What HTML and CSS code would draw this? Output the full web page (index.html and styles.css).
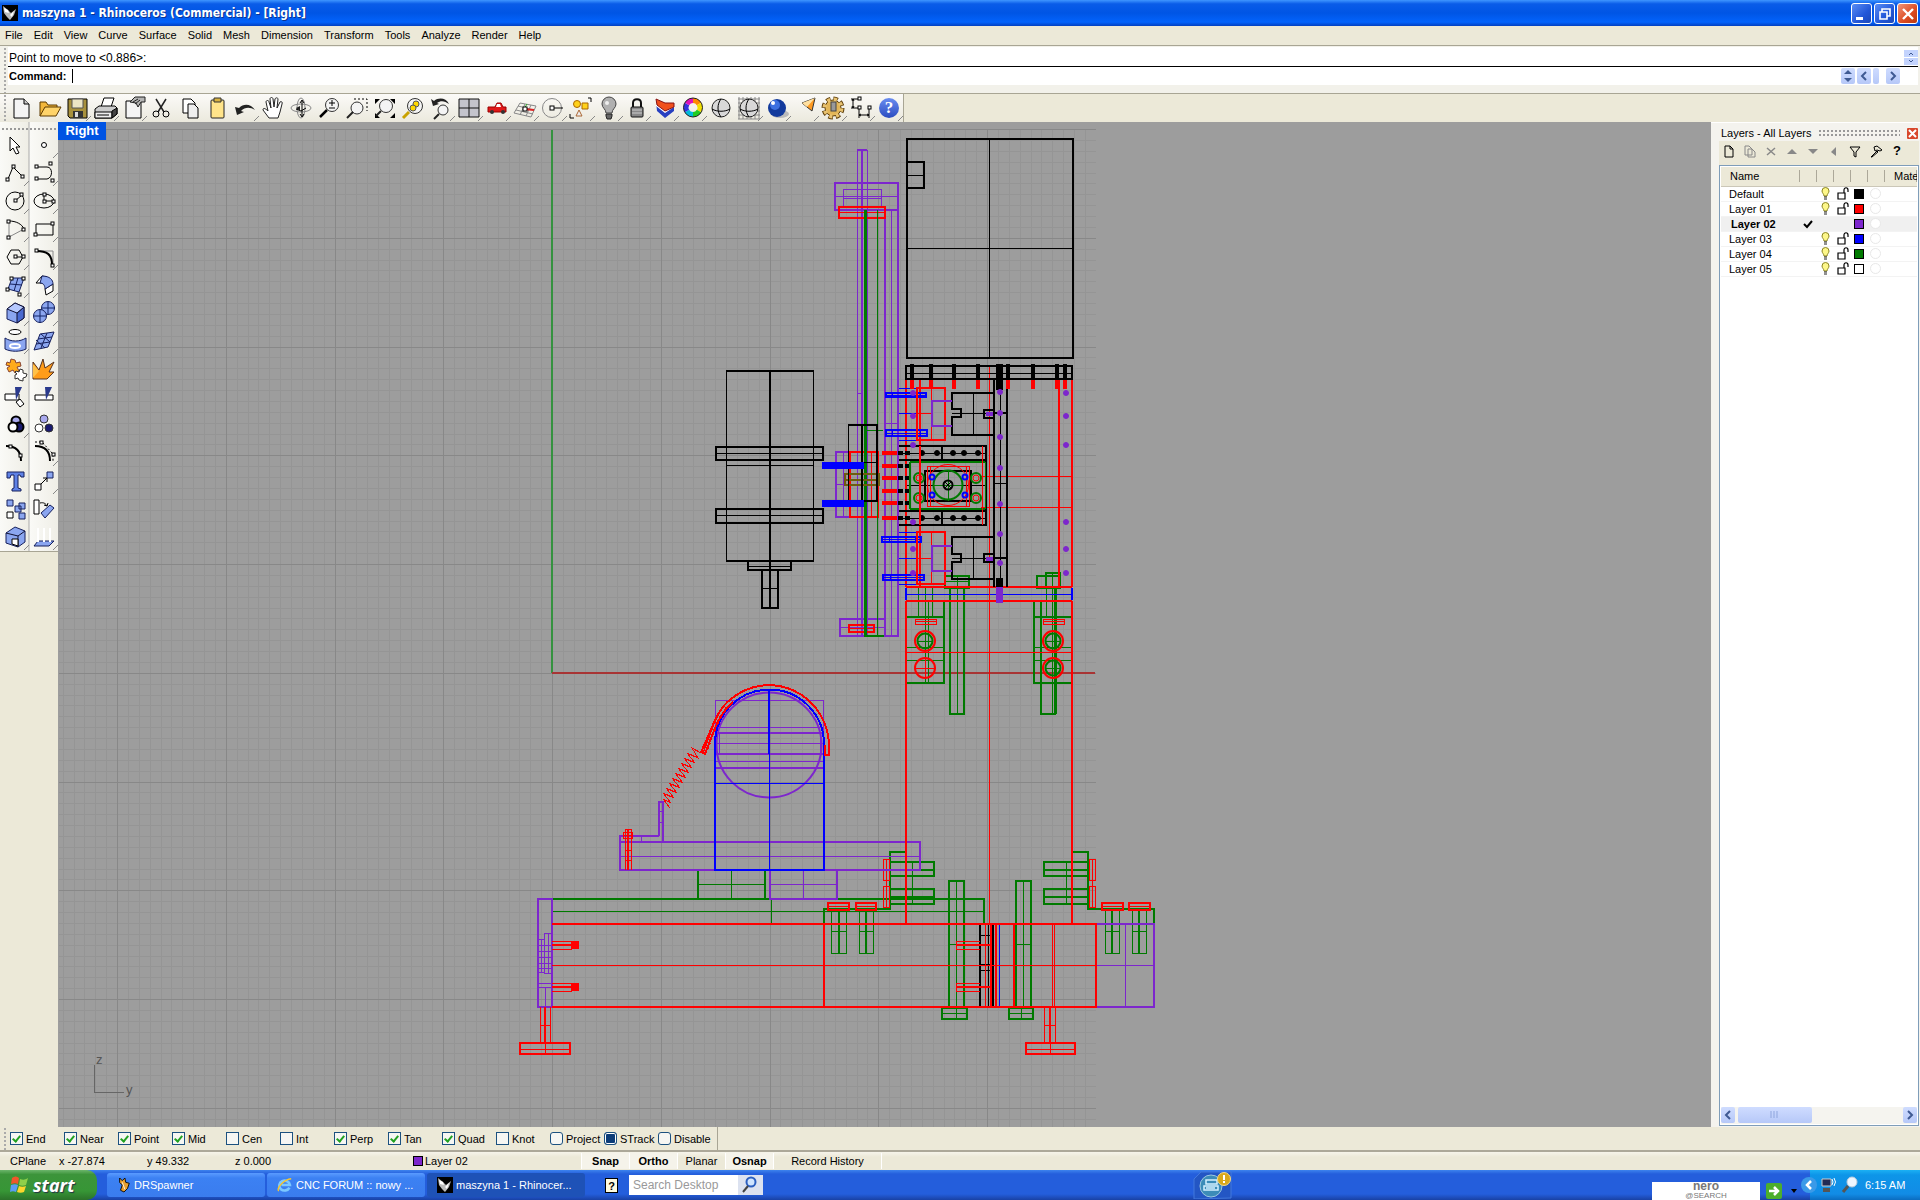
FILE: index.html
```
<!DOCTYPE html>
<html lang="en">
<head>
   <meta charset="utf-8">
   <title>maszyna 1 - Rhinoceros (Commercial) - [Right]</title>
   <link rel="stylesheet" href="styles.css">
</head>
<body>
   <header class="titlebar">
      <svg class="app" width="16" height="16" viewBox="0 0 16 16"><rect width="16" height="16" fill="#000"/><path d="M1 1l5 4 3 3 5-4-2 6-4 5-3-3-3-4z" fill="#bbb"/><path d="M2 3l4 2 1 3-4-1zM8 10l4-4-2 6z" fill="#fff"/></svg>
      <h1>maszyna 1 - Rhinoceros (Commercial) - [Right]</h1>
      <button class="win" aria-label="Minimize"><svg width="20" height="20" viewBox="0 0 20 20"><path d="M4 13h7v3H4z" fill="#fff"/></svg></button>
      <button class="win" aria-label="Restore"><svg width="20" height="20" viewBox="0 0 20 20"><path d="M7 8V5h8v7h-3M5 8h7v7H5z" fill="none" stroke="#fff" stroke-width="1.6"/></svg></button>
      <button class="win close" aria-label="Close"><svg width="20" height="20" viewBox="0 0 20 20"><path d="M5 5l10 10M15 5L5 15" stroke="#fff" stroke-width="2.4"/></svg></button>
   </header>

   <nav class="menu">
      <button>File</button><button>Edit</button><button>View</button><button>Curve</button><button>Surface</button><button>Solid</button><button>Mesh</button><button>Dimension</button><button>Transform</button><button>Tools</button><button>Analyze</button><button>Render</button><button>Help</button>
   </nav>

   <section class="command">
      <div class="history"><span>Point to move to &lt;0.886&gt;:</span>
         <span class="spin"><button aria-label="Up"><svg width="14" height="7"><path d="M5 5l2-2 2 2" class="arrow"/></svg></button><button aria-label="Down"><svg width="14" height="7"><path d="M5 2l2 2 2-2" class="arrow"/></svg></button></span>
      </div>
      <div class="prompt">
         <label for="cmd">Command:</label>
         <input id="cmd" type="text">
         <button class="sb" aria-label="Commands"><svg width="14" height="16"><path d="M3 6l4-4 4 4zM3 10l4 4 4-4z" fill="#3f5a93"/></svg></button>
         <button class="sb" aria-label="Left"><svg width="14" height="16"><path d="M9 4L5 8l4 4" class="arrow bold"/></svg></button>
         <span class="sb thumb"></span>
         <button class="sb" aria-label="Right"><svg width="14" height="16"><path d="M5 4l4 4-4 4" class="arrow bold"/></svg></button>
      </div>
   </section>

   <div class="toolrow">
   <div class="toolbar">
      <button aria-label="New"><svg viewBox="0 0 28 28"><path d="M7 5h10l5 5v14H7z" fill="#f4f4f4" stroke="#000"/><path d="M17 5v5h5" fill="#ccc" stroke="#000"/></svg></button>
      <button aria-label="Open"><svg viewBox="0 0 28 28"><path d="M5 22V8h6l2 3h9v3" fill="#f3b73b" stroke="#5d3a00"/><path d="M5 22l5-9h16l-5 9z" fill="#ffd46a" stroke="#5d3a00"/></svg></button>
      <button class="more" aria-label="Save"><svg viewBox="0 0 28 28"><path d="M5 5h19v19H7l-2-2z" fill="#a8913c" stroke="#000"/><path d="M9 5h11v9H9z" fill="#ece5c4" stroke="#555"/><path d="M10 17h10v7H10z" fill="#333"/><path d="M12 18h3v5h-3z" fill="#ddd"/></svg></button>
      <button class="more" aria-label="Print"><svg viewBox="0 0 28 28"><path d="M10 13l3-9h10l-3 9z" fill="#fff" stroke="#000"/><path d="M4 15l4-3h16l2 2v6l-5 4H4z" fill="#ccc" stroke="#000"/><path d="M4 18h17v6H4z" fill="#eee" stroke="#000"/><path d="M6 21h12M21 17l5-3v6l-5 4z" stroke="#000" fill="#444"/></svg></button>
      <button class="more" aria-label="Properties"><svg viewBox="0 0 28 28"><path d="M7 7h15v17H7z" fill="#f4f4f4" stroke="#000"/><path d="M11 8l5-5h10v5h-4l-3 5-2-4z" fill="#b5b5b5" stroke="#222"/><path d="M14 8l5-3M16 10l5-4" stroke="#222"/></svg></button>
      <button aria-label="Cut"><svg viewBox="0 0 28 28"><path d="M9 5l8 13M19 5l-8 13" stroke="#222" stroke-width="1.500" fill="none"/><circle cx="9" cy="20" r="3" class="ln"/><circle cx="19" cy="20" r="3" class="ln"/></svg></button>
      <button aria-label="Copy"><svg viewBox="0 0 28 28"><path d="M8 5h8l4 4v10H8z" fill="#fff" stroke="#000"/><path d="M13 10h6l4 4v10H13z" fill="#eee" stroke="#000"/></svg></button>
      <button aria-label="Paste"><svg viewBox="0 0 28 28"><rect x="8" y="6" width="13" height="18" rx="1" fill="#ffe48a" stroke="#222"/><path d="M11 4h7v4h-7z" fill="#d8b240" stroke="#333"/></svg></button>
      <button class="more" aria-label="Undo"><svg viewBox="0 0 28 28"><path d="M4 13l2 8 7-3-3-1c4-4 9-4 14-1-4-6-11-7-16-2z" fill="#222"/></svg></button>
      <button aria-label="Pan"><svg viewBox="0 0 28 28"><path d="M10 24l-6-8c0-3 3-1 5 1L7 8c0-2 3-2 3 0l2 6-1-9c0-2 3-2 3 0l1 8 1-8c1-2 3-1 3 0l-1 9 3-6c1-1 3 0 2 2l-2 8-2 6z" fill="#fff" stroke="#222"/></svg></button>
      <button aria-label="Rotate view"><svg viewBox="0 0 28 28"><ellipse cx="14" cy="14" rx="10" ry="4" class="gy"/><ellipse cx="14" cy="14" rx="4" ry="10" class="gy"/><path d="M15 7v15M9 15l5 2 5-3M13 9l2-3 2 3M13 20l2 3 2-3" class="ln"/><path d="M9 14l4-2v5z" fill="#222"/></svg></button>
      <button aria-label="Zoom"><svg viewBox="0 0 28 28"><circle cx="17" cy="11" r="6.500" class="lens"/><path d="M14 9h6M17 6v6M14 14h6" class="ln"/><path d="M12 16l-7 7" stroke="#000" stroke-width="2.500"/></svg></button>
      <button aria-label="Zoom window"><svg viewBox="0 0 28 28"><path d="M11 5h13v12" class="ln" stroke-dasharray="2 2"/><circle cx="14" cy="14" r="6" class="lens"/><path d="M10 18l-6 6" stroke="#222" stroke-width="2"/></svg></button>
      <button aria-label="Zoom extents"><svg viewBox="0 0 28 28"><path d="M4 5h5l-5 5zM24 5h-5l5 5zM4 24v-5l5 5zM24 24v-5l-5 5z" fill="#000"/><circle cx="15" cy="12" r="6.500" class="lens"/><path d="M10 17l-5 5" stroke="#222" stroke-width="2"/></svg></button>
      <button aria-label="Zoom selected"><svg viewBox="0 0 28 28"><circle cx="16" cy="12" r="7.500" class="lens"/><circle cx="17" cy="10" r="3" fill="#ffd800" stroke="#555"/><circle cx="14" cy="14" r="3" fill="#ffd800" stroke="#555"/><path d="M10 18l-6 6" stroke="#c9a200" stroke-width="3"/></svg></button>
      <button class="more" aria-label="Undo view"><svg viewBox="0 0 28 28"><path d="M4 5l2 7 6-2-2-1c4-3 8-2 12 1-3-6-10-7-15-3z" fill="#222"/><circle cx="16" cy="16" r="5" class="lens"/><path d="M12 20l-5 5" stroke="#222" stroke-width="2"/></svg></button>
      <button class="more" aria-label="Four views"><svg viewBox="0 0 28 28"><path d="M4 5h20v18H4zM14 5v18M4 14h20" fill="#c4c4cc" stroke="#111"/></svg></button>
      <button class="more" aria-label="Named views"><svg viewBox="0 0 28 28"><path d="M5 13h7l2-4h4l2 4h3v5H5z" fill="#e01818" stroke="#900"/><path d="M14 10h3l1 3h-5z" fill="#fff"/><circle cx="9" cy="18" r="2" fill="#333"/><circle cx="20" cy="18" r="2" fill="#333"/></svg></button>
      <button class="more" aria-label="CPlane"><svg viewBox="0 0 28 28"><path d="M9 9l16 3-5 11-17-4zM7 12l16 4M5 16l17 4M14 10l-5 11M20 11l-5 11" class="gy"/><path d="M13 15l10 1" stroke="#d22" stroke-width="2"/><path d="M13 15l3-5" stroke="#2a2"/><rect x="12" y="13" width="4" height="4" class="nd"/></svg></button>
      <button class="more" aria-label="Set view"><svg viewBox="0 0 28 28"><circle cx="13" cy="14" r="9.500" class="gy"/><path d="M13 14h11" class="ln"/><rect x="11" y="12" width="4" height="4" class="nd"/></svg></button>
      <button class="more" aria-label="Select"><svg viewBox="0 0 28 28"><circle cx="10" cy="10" r="3.500" fill="#ffd21c" stroke="#a60"/><path d="M15 9h6v6h-6z" fill="#ffd21c" stroke="#a60"/><path d="M12 16l3 6H9z" fill="#eee" stroke="#a63"/><path d="M21 4h3v4M3 20v4h4" class="ln"/></svg></button>
      <button class="more" aria-label="Hide"><svg viewBox="0 0 28 28"><path d="M11 19c0-4-4-5-4-9a7 7 0 0114 0c0 4-4 5-4 9z" fill="#b0b0b0" stroke="#444"/><path d="M11 20h6v2l-1 3h-4l-1-3z" fill="#666" stroke="#222"/><circle cx="12" cy="9" r="2" fill="#eee"/></svg></button>
      <button class="more" aria-label="Lock"><svg viewBox="0 0 28 28"><path d="M10 14V9c0-5 8-5 8 0v5" fill="none" stroke="#111" stroke-width="2"/><rect x="8" y="13" width="12" height="10" rx="1" fill="#888" stroke="#111"/><path d="M9 16h10M9 19h10" stroke="#ccc"/></svg></button>
      <button class="more" aria-label="Layers"><svg viewBox="0 0 28 28"><path d="M5 8l10 5 8-3v7l-9 7-8-7z" fill="#2840c0"/><path d="M5 8l9 7 9-5v3l-9 6-9-7z" fill="#fff"/><path d="M5 5l9 4h9v4l-9 4-8-6z" fill="#f0501c" stroke="#811"/></svg></button>
      <button class="more" aria-label="Properties"><svg viewBox="0 0 28 28" fill="none" stroke-width="5"><path d="M14 6.500a7 7 0 016 3.500" stroke="#f80"/><path d="M20 10a7 7 0 010 7" stroke="#f2e000"/><path d="M20 17a7 7 0 01-6 3.500" stroke="#2c2"/><path d="M14 20.500a7 7 0 01-6-3.500" stroke="#0bd"/><path d="M8 17a7 7 0 010-7" stroke="#33d"/><path d="M8 10a7 7 0 016-3.500" stroke="#d1b"/><circle cx="14" cy="13.500" r="9.500" stroke="#222" stroke-width="1"/></svg></button>
      <button aria-label="Shade"><svg viewBox="0 0 28 28"><circle cx="14" cy="14" r="9" fill="#d8d8d8" stroke="#222"/><path d="M5 15c5 3 13 3 18 0M14 5c-4 5-4 13 0 18" class="ln"/></svg></button>
      <button class="more" aria-label="Shaded view"><svg viewBox="0 0 28 28"><path d="M3 5h22M3 9h22M3 13h22M3 17h22M3 21h22M3 25h22M4 3v22M8 3v22M12 3v22M16 3v22M20 3v22M24 3v22" stroke="#888"/><circle cx="14" cy="14" r="9" fill="#d8d8d8" stroke="#222"/><path d="M5 15c5 3 13 3 18 0M14 5c-4 5-4 13 0 18" class="ln"/></svg></button>
      <button class="more" aria-label="Render"><svg viewBox="0 0 28 28"><ellipse cx="17" cy="20" rx="9" ry="4" fill="#bbb"/><circle cx="14" cy="14" r="9" fill="#123a9c"/><circle cx="12" cy="11" r="5" fill="#3d70e0"/><circle cx="10" cy="9" r="2" fill="#fff"/></svg></button>
      <button class="more" aria-label="Spotlight"><svg viewBox="0 0 28 28"><path d="M11 9l13-5-3 13z" fill="#ff9a20" stroke="#333"/><path d="M11 9l13-5-8 9z" fill="#ffe0a0"/></svg></button>
      <button class="more" aria-label="Options"><svg viewBox="0 0 28 28"><circle cx="14" cy="14" r="8.500" fill="none" stroke="#5b3c08" stroke-width="6" stroke-dasharray="4 2.700"/><circle cx="14" cy="14" r="8" fill="#e3b658" stroke="#5b3c08"/><circle cx="14" cy="14" r="8.500" fill="none" stroke="#e8c270" stroke-width="4" stroke-dasharray="3 3.700" stroke-dashoffset="-.5"/><rect x="12" y="8" width="5" height="9" fill="#999" stroke="#444"/></svg></button>
      <button class="more" aria-label="Dimension"><svg viewBox="0 0 28 28"><path d="M4 5h8M4 14h8M6 5v9M12 14v10M22 14v10M12 21h10M5 7l1-2 1 2M5 12l1 2 1-2M14 20l-2 1 2 1M20 20l2 1-2 1" class="ln"/><rect x="11" y="3" width="3" height="3" class="nd"/><rect x="11" y="12" width="3" height="3" class="nd"/><rect x="21" y="12" width="3" height="3" class="nd"/></svg></button>
      <button class="more help" aria-label="Help"><span>?</span></button>
   </div>
   </div>

   <main class="work">
      <aside class="tools">
      <div class="palette">
         <button aria-label="Select"><svg viewBox="0 0 28 28"><path d="M9 6v14l3-3 3 6 3-1-3-6h4z" fill="#fff" stroke="#000"/></svg></button>
         <button class="more" aria-label="Point"><svg viewBox="0 0 28 28"><circle cx="14" cy="14" r="2.500" class="nd"/></svg></button>
         <button class="more" aria-label="Polyline"><svg viewBox="0 0 28 28"><path d="M7 20l5-12 9 9" class="ln"/><rect x="5" y="19" width="3" height="3" class="nd"/><rect x="11" y="6" width="3" height="3" class="nd"/><rect x="20" y="16" width="3" height="3" class="nd"/></svg></button>
         <button class="more" aria-label="Curve"><svg viewBox="0 0 28 28"><path d="M7 8h10c6 0 6 11 0 12H7" class="ln"/><rect x="5" y="6" width="3" height="3" class="nd"/><rect x="19" y="3" width="3" height="3" class="nd"/><rect x="5" y="18" width="3" height="3" class="nd"/><rect x="21" y="20" width="3" height="3" class="nd"/></svg></button>
         <button class="more" aria-label="Circle"><svg viewBox="0 0 28 28"><circle cx="14" cy="14" r="9" class="ln"/><path d="M14 14l7-6" class="ln"/><rect x="13" y="12" width="3" height="3" class="nd"/><rect x="19" y="6" width="3" height="3" class="nd"/></svg></button>
         <button class="more" aria-label="Ellipse"><svg viewBox="0 0 28 28"><ellipse cx="14" cy="14" rx="10" ry="7" class="ln"/><path d="M14 14h10M14 14V7" class="ln"/><rect x="13" y="13" width="3" height="3" class="nd"/><rect x="13" y="6" width="3" height="3" class="nd"/><rect x="22" y="13" width="3" height="3" class="nd"/></svg></button>
         <button class="more" aria-label="Arc"><svg viewBox="0 0 28 28"><path d="M8 6v16l15-8" class="gy"/><path d="M8 6c7 0 13 3 15 8" class="ln"/><rect x="6" y="5" width="3" height="3" class="nd"/><rect x="6" y="21" width="3" height="3" class="nd"/><rect x="21" y="13" width="3" height="3" class="nd"/></svg></button>
         <button class="more" aria-label="Rectangle"><svg viewBox="0 0 28 28"><path d="M6 9h17v11H6z" class="ln"/><rect x="21" y="7" width="3" height="3" class="nd"/><rect x="4" y="18" width="3" height="3" class="nd"/></svg></button>
         <button class="more" aria-label="Polygon"><svg viewBox="0 0 28 28"><path d="M6 14l4-7h8l4 7-4 7h-8zM14 14h8" class="ln"/><rect x="13" y="12" width="3" height="3" class="nd"/><rect x="21" y="12" width="3" height="3" class="nd"/></svg></button>
         <button class="more" aria-label="Fillet"><svg viewBox="0 0 28 28"><path d="M6 8h17v14" class="gy"/><path d="M6 8c11 0 16 3 16 14" class="ln w2"/><rect x="5" y="6" width="3" height="3" class="nd"/><rect x="21" y="21" width="3" height="3" class="nd"/></svg></button>
         <button class="more" aria-label="Surface"><svg viewBox="0 0 28 28"><path d="M11 7h12l-5 14-11-3zM17 7l-4 13M9 13l12 1" class="bl"/><rect x="9" y="6" width="3" height="3" class="nd"/><rect x="21" y="6" width="3" height="3" class="nd"/><rect x="5" y="17" width="3" height="3" class="nd"/><rect x="17" y="22" width="3" height="3" class="nd"/></svg></button>
         <button class="more" aria-label="Sweep"><svg viewBox="0 0 28 28"><path d="M6 12l6-7 5 1-3 6zM15 18l8-5v7l-7 4z" fill="#fff" stroke="#000"/><path d="M12 5c8 0 11 4 11 8l-8 5c0-4-2-6-5-6z" class="bl"/></svg></button>
         <button class="more" aria-label="Box"><svg viewBox="0 0 28 28"><path d="M6 10l8-6 9 4v11l-7 5-10-4z" class="bl"/><path d="M16 14v10l7-5V8z" fill="#4a6ad0" stroke="#113"/><path d="M6 10l8-6 9 4-7 6z" fill="#b5c8ff" stroke="#113"/></svg></button>
         <button class="more" aria-label="Boolean"><svg viewBox="0 0 28 28"><circle cx="18" cy="9" r="6.500" class="bl"/><circle cx="10" cy="17" r="6.500" class="bl"/><path d="M4 17h13M10 11v13M12 9h13M18 3v12" stroke="#126" fill="none"/></svg></button>
         <button class="more" aria-label="Project"><svg viewBox="0 0 28 28"><ellipse cx="14" cy="5" rx="6" ry="2.500" class="nd"/><path d="M4 11c6 4 15 4 21 0v11c-6 3-15 3-21 0z" class="bl"/><ellipse cx="14" cy="19" rx="5" ry="2" fill="none" stroke="#fff" stroke-width="2"/></svg></button>
         <button class="more" aria-label="Mesh"><svg viewBox="0 0 28 28"><path d="M10 7l14-2-6 15-14 3zM17 6l-6 15M8 12l14-2M6 17l14-2M11 7l9 8M6 13l9 8" class="bl"/></svg></button>
         <button aria-label="Plug-ins"><svg viewBox="0 0 28 28"><path d="M6 7l3 1 1-4 4 1 1 3 4-1 1 4-4 1 2 4-4 2-2-3-4 2-2-4 3-2-4-1z" fill="#ffab1c" stroke="#843"/><path d="M15 16l3 1 1-3 3 1v3l4 1-1 3-3 1v3l-4-1-1-2-3 1v-4l2-1-2-2z" fill="#fff" stroke="#333"/></svg></button>
         <button aria-label="Explode"><svg viewBox="0 0 28 28"><path d="M3 7l6 8 4-11 2 9 9-6-5 10h5l-7 7H3z" fill="#ff9c1a" stroke="#532"/><path d="M3 9l6 7-6 7z" fill="#ffc14a"/></svg></button>
         <button aria-label="Trim"><svg viewBox="0 0 28 28"><path d="M4 11h14v6H4z" fill="#fff" stroke="#000"/><path d="M15 19l4-3 4 5-4 3z" fill="#fff" stroke="#000"/><path d="M14 4h7l-6 13z" fill="#2a3a8c"/></svg></button>
         <button aria-label="Split"><svg viewBox="0 0 28 28"><path d="M5 12h18v5H5z" fill="#fff" stroke="#000"/><path d="M15 4h7l-6 13z" fill="#2a3a8c"/></svg></button>
         <button class="more" aria-label="Join"><svg viewBox="0 0 28 28"><g stroke="#000" stroke-width="2"><circle cx="15" cy="10" r="4.500" fill="#a9a9ee"/><circle cx="18" cy="16" r="4.500" fill="#1a1a70"/><circle cx="12" cy="16" r="4.500" fill="#fff"/></g></svg></button>
         <button aria-label="Group"><svg viewBox="0 0 28 28"><g stroke="#333"><circle cx="14" cy="8" r="4" fill="#a9a9ee"/><circle cx="19" cy="17" r="4" fill="#1a1a70"/><circle cx="9" cy="17" r="4" fill="#fff"/></g></svg></button>
         <button aria-label="Edit points"><svg viewBox="0 0 28 28"><path d="M5 7c10 0 15 5 15 15" class="ln w2"/><rect x="8" y="6" width="3" height="3" class="nd"/><rect x="18" y="15" width="3" height="3" class="nd"/></svg></button>
         <button class="more" aria-label="Control points"><svg viewBox="0 0 28 28"><path d="M5 7c10 0 15 5 15 15" class="ln w2"/><path d="M5 3h7l11 12v7" class="ln" stroke-dasharray="2 2"/><rect x="10" y="2" width="3" height="3" class="nd"/><rect x="22" y="14" width="3" height="3" class="nd"/></svg></button>
         <button aria-label="Type"><svg viewBox="0 0 28 28"><path d="M6 5h17v5h-3l-1-2h-2v13l3 1v2h-9v-2l2-1V8h-3l-1 3H6z" fill="#5f82e6" stroke="#16205c"/></svg></button>
         <button class="more" aria-label="Move"><svg viewBox="0 0 28 28"><path d="M17 5h6v6h-6z" class="bl"/><path d="M5 17h6v6H5z" fill="#fff" stroke="#000"/><path d="M11 17l6-6m-4 0h4v4" class="ln"/></svg></button>
         <button aria-label="Array"><svg viewBox="0 0 28 28"><path d="M6 5h6v6H6zM18 8h6v6h-6zM14 11h6v6h-6zM18 18h6v6h-6z" class="bl"/><path d="M6 17h6v6H6z" fill="#fff" stroke="#000"/></svg></button>
         <button aria-label="Rotate"><svg viewBox="0 0 28 28"><path d="M4 5h5v14H4z" fill="#fff" stroke="#000"/><path d="M11 18l9-8 4 3-9 10z" class="bl"/><path d="M10 8c4-1 6 1 7 3m-3-1l3 1 1-3" class="ln"/></svg></button>
         <button class="more" aria-label="Analyze"><svg viewBox="0 0 28 28"><path d="M5 10l9-6 10 4v11l-7 5-12-4z" class="bl"/><path d="M5 10l12 3 7-5M17 13v11" fill="none" stroke="#113"/><path d="M11 16h6v7l-6-2z" fill="#fff" stroke="#000"/></svg></button>
         <button class="more" aria-label="Render"><svg viewBox="0 0 28 28"><path d="M8 18h16l-5 5H4z" class="bl"/><path d="M8 5v14M14 5v14M20 5v14" stroke="#fff" stroke-width="2"/></svg></button>
      </div>
      </aside>

      <section class="viewport">
         <h2>Right</h2>
         <svg class="drawing">
         <g transform="translate(-58 -122)">
            <!-- construction grid, 10 minor lines to a major -->
            <path d="M62.625 628H1096" stroke="#959595" stroke-width="998" stroke-dasharray="1 9.875"/>
            <path d="M577 129V1127" stroke="#959595" stroke-width="1037" stroke-dasharray="1 9.875"/>
            <path d="M117 628H1096" stroke="#888" stroke-width="998" stroke-dasharray="1 107.750"/>
            <path d="M577 129V1127" stroke="#888" stroke-width="1037" stroke-dasharray="1 107.750"/>
            <path d="M552 130V673" stroke="#35923f" stroke-width="2"/>
            <path d="M552 673H1095" stroke="#a83434" stroke-width="2"/>
            <path d="M94 1065V1092H124" stroke="#666"/>

            <!-- base frame -->
            <g class="g">
               <path class="t" d="M553 899H984V924M824 924V909H890V852H906M1072 852H1088V909H1154V924"/>
               <path d="M553 911H984M771 899V924"/>
               <path class="t" d="M698 870V899M765 870V899"/><path d="M731 870V899M698 884H765"/>
               <path d="M831 910H846V953H831ZM859 910H873V953H859ZM1105 910H1119V953H1105ZM1132 910H1146V953H1132Z"/>
               <path class="t" d="M839 910V953M866 910V953M1112 910V953M1139 910V953"/>
               <path d="M831 931H846M859 931H873M1105 931H1119M1132 931H1146"/>
               <path class="t" d="M890 862H934V876H890ZM890 889H934V904H890ZM1044 862H1088V876H1044ZM1044 889H1088V904H1044Z"/>
               <path d="M912 862V904M1066 862V904"/>
               <path class="t" d="M890 870H934M890 897H934M1044 870H1088M1044 897H1088"/>
               <path class="t" d="M949 1007V881H964V1007M1016 1007V881H1031V1007"/>
               <path d="M956 881V1007M1023 881V1007M949 944H964M1016 944H1031M942 1013H967M1009 1013H1033M956 1007V1019M1021 1007V1019"/>
               <path class="t" d="M942 1008H967V1019H942ZM1009 1008H1033V1019H1009Z"/>
            </g>
            <g class="p">
               <path class="t" d="M538 899H552V1007H538ZM1096 924H1154V1007H1096"/>
               <path d="M1125 924V1007M1096 965H1154M544 933H552V973H544ZM548 933V973M538 939H544V972H538ZM541 939V972M538 945H552M538 951H552M538 957H552M538 963H552M538 968H552M545 987V1007M538 987H552M538 983H552"/>
            </g>
            <g class="k">
               <path class="t" d="M980 924V1007M993 924V1007"/><path d="M980 935H992M980 964H992M980 970H992M988 924V1007"/>
            </g>
            <path class="b" d="M999 924V1007"/>
            <g class="r">
               <path class="t" d="M552 924H1096V1007H552M824 924V1007M1014 924V1007M991 924V1007M996 924V1007"/>
               <path d="M552 965H1096M1052 924V1007M1054 924V1007M985 924V1007"/>
               <path d="M552 941H572M552 949H572M552 983H572M552 991H572M980 941H956V949H980M980 983H956V991H980"/>
               <path class="t" d="M552 945H572M552 987H572M956 945H992M956 987H992"/>
               <path class="f" d="M571 941h7v7h-7zM571 983h7v7h-7z"/>
               <path d="M540 1007V1043M550 1007V1043M540 1025H550M1044 1007V1043M1055 1007V1043M1044 1025H1055M520 1049H570M1026 1049H1075M545 1043V1055M1050 1043V1055"/>
               <path class="t" d="M545 1007V1043M1050 1007V1043M520 1043H570V1054H520ZM1026 1043H1075V1054H1026Z"/>
               <path class="t" d="M828 903H849V910H828ZM856 903H876V910H856ZM1102 903H1123V910H1102ZM1129 903H1150V910H1129Z"/>
               <path d="M828 906H849M856 906H876M1102 906H1123M1129 906H1150"/>
               <path d="M883 859H889V880H883ZM883 886H889V907H883ZM1089 859H1095V880H1089ZM1089 886H1095V907H1089ZM886 859V907M1092 859V907"/>
            </g>

            <!-- table and lower motor -->
            <g class="p">
               <path class="t" d="M659 836H620V870H920V842H620M659 836V802H663V842M770 870V899H837V870"/>
               <path d="M620 856H920M641 836V842M803 870V899M770 884H837M659 811H663M659 822H663"/>
               <path d="M715 754V700H823V754M715 727H823M715 743H823M715 754H823M715 761H823M719 754V733M820 754V733"/>
               <path class="t" d="M715 733H823M715 754H823M715 768H823"/>
               <circle class="t" cx="769" cy="745" r="52.500"/>
            </g>
            <g class="b">
               <path class="t" d="M715 744V870H824V744A54.500 54.500 0 00715 744"/>
               <path class="t" d="M769 689V754"/><path d="M769 689V870M715 783H824"/>
            </g>
            <g class="r">
               <path class="t" d="M731 699A60 61 0 01829 745V755H825V745M731 699C716 710 712 730 701 752L705 754C714 731 718 715 733 702"/>
               <path d="M727 702C715 714 713 730 703 753M706 742l5 2M711 729l5 2M717 715l5 3M723 706l5 3M704 747l5 2M714 722l5 2"/>
               <path d="M703 751l-2 2l-9-5l6 10l-11-5l8 10l-11-5l8 10l-11-5l8 10l-11-5l8 10l-11-5l8 10l-11-5l8 10l-11-5l8 10l-11-5l8 10l-11-5l8 10l-8-4l7 9"/>
               <path d="M625 829H631V870M625 829V870M623 832H632V838H623ZM623 835H632M625 850H631M625 860H631"/><path class="t" d="M628 829V870"/>
            </g>

            <!-- column -->
            <g class="g">
               <path class="t" d="M945 576H969V588H945ZM1037 576H1060V588H1037ZM1046 573H1060V587H1046Z"/>
               <path d="M945 581H969M957 576V714M1052 573V714M1056 588V714M1046 588V617M918 588V617M925 588V682M932 588V617M928 600V682M906 647H944M906 660H944M1034 647H1072M1034 660H1072M918 594H932M956 652H964"/>
               <path class="t" d="M950 588V714H964V588M1041 600V714H1055V588M944 600V683H906M1034 600V683H1072M906 617H944M1034 617H1072"/>
               <circle class="t" cx="925" cy="641" r="7.500"/><circle class="t" cx="1053" cy="641" r="7.500"/><circle class="t" cx="1053" cy="668" r="7.500"/><path d="M918 641H933M1045 641H1061M1045 668H1061"/>
            </g>
            <g class="b"><path d="M906 594H1072"/><path class="t" d="M906 588V600M1072 588V600"/></g>
            <g class="r">
               <path class="t" d="M906 380V587M1072 380V587M906 601V924M1072 601V924M906 587H1072M906 601H1072M920 380V587M1059 380V587"/>
               <path d="M989 366V924M981 476H1072M981 507H1072M906 652H1072M915 619H936V624H915ZM1043 619H1064V624H1043ZM915 621H936M1043 621H1064M915 668H936M925 658V678"/>
               <circle class="t" cx="925" cy="641" r="10"/><circle class="t" cx="925" cy="668" r="10"/><circle class="t" cx="1053" cy="641" r="10"/><circle class="t" cx="1053" cy="668" r="10"/>
            </g>

            <!-- spindle slide -->
            <g class="p">
               <path d="M857 150V636M867 150V636M843 206V189H881V206M835 196H898M843 198H881M891 210V636M857 393H862M885 423H898M840 627H885M843 452V517M836 484H850"/>
               <path class="t" d="M857 150H867M862 150V636M835 183H898V210H835ZM885 210V636H898V210M885 619H840V636H885M850 452H836V517H850"/>
            </g>
            <g class="r">
               <path class="t" d="M839 207H885V218H839ZM850 452H878V517H850ZM849 625H874V632H849Z"/><path d="M839 212H885M871 452V517M849 628H874"/>
            </g>
            <g class="g">
               <path class="t3" d="M865 210V636"/><path d="M877 210V636M865 430H883"/><path class="t" d="M864 636H884"/>
               <path class="olive t" d="M845 474H879V485H845ZM845 480H879"/>
            </g>
            <g class="k">
               <path class="t" d="M726 371H814M726 561H814M770 371V608M716 447H823V460H716ZM716 509H823V523H716ZM748 561H791V570H748ZM762 570V608H778V570M862 425V501M848 425H877V501H862"/>
               <path d="M726 371V561M813 371V561M726 465H814M716 453H823M716 515H823M748 566H791M762 588H778M848 425V501M848 462H877"/>
            </g>
            <g class="b">
               <path class="f" d="M822 462h41v6h-41zM822 500h41v6h-41z"/>
               <path class="t" d="M886 393H926V397H886ZM886 430H927V436H886ZM882 537H921V542H882ZM883 575H924V580H883Z"/>
               <path d="M886 395H926M886 433H927M882 539H921M883 577H924M892 393V397M920 393V397M892 430V436M920 430V436M889 537V542M915 537V542M890 575V580M917 575V580M899 388H917M899 440H917M899 532H917M899 584H917M899 413H917M899 558H917"/>
            </g>

            <!-- control cabinet -->
            <g class="k">
               <path class="t" d="M907 139H1073V358H907ZM907 162H924V188H907"/><path d="M989 139V358M907 248H1073M907 175H924"/>
            </g>

            <!-- ball screw housing -->
            <g class="k">
               <path class="t" d="M906 366H1072V379H906ZM994 379V587M1007 379V587M994 393H952V409H961V417H952V435H994M994 537H952V554H961V562H952V579H994M984 410H994V418H984ZM984 554H994V562H984ZM994 413H1008M994 558H1008"/>
               <path d="M906 373H1072M1000 389V587M994 483H1007M973 393V435M973 537V579M952 413H994M952 558H994M899 453H986M899 518H986M907 485H986"/>
               <path class="t" d="M899 446H986V525H899M899 460H986M899 511H986M942 446V460M942 511V525M925 471H971V501H925Z"/>
               <path class="bolt" d="M912 364V379M931 364V379M954 364V379M978 364V379M1008 364V379M1033 364V379M1057 364V379M1065 364V379"/>
               <path class="f" d="M996 364h6v25h-6zM996 578h6v9h-6z"/>
               <path class="pin" d="M898 453H910M898 466H910M898 478H910M898 491H910M898 503H910M898 518H910" stroke-dasharray="5 2"/>
               <g class="f"><circle cx="922" cy="453" r="2.500"/><circle cx="937" cy="453" r="2.500"/><circle cx="953" cy="453" r="2.500"/><circle cx="964" cy="453" r="2.500"/><circle cx="978" cy="453" r="2.500"/><circle cx="922" cy="518" r="2.500"/><circle cx="937" cy="518" r="2.500"/><circle cx="953" cy="518" r="2.500"/><circle cx="964" cy="518" r="2.500"/><circle cx="978" cy="518" r="2.500"/></g>
            </g>
            <g class="g">
               <path class="t" d="M910 462H985M910 509H985M910 462V509"/><path d="M948 471V501M933 485H963M985 462V509"/><circle class="t" cx="948" cy="485" r="14.500"/>
               <circle class="t" cx="919" cy="478" r="5"/><circle class="t" cx="976" cy="478" r="5"/><circle class="t" cx="919" cy="498" r="5"/><circle class="t" cx="976" cy="498" r="5"/>
            </g>
            <g class="r">
               <path class="t" d="M917 388H945V440H917ZM917 532H945V584H917Z"/>
               <path d="M931 388V440M931 532V584M917 413H931M917 558H931M927 466H969V506H927ZM930 466V506M966 466V506M982 446V525"/>
               <path class="bolt" d="M912 380V389M931 380V389M954 380V389M978 380V389M1008 380V389M1033 380V389M1057 380V389M1065 380V389"/>
               <path class="pin" d="M882 453H897M882 466H897M882 478H897M882 491H897M882 503H897M882 518H897"/>
               <circle cx="948" cy="485" r="20.500"/><circle cx="919" cy="478" r="3"/><circle cx="976" cy="478" r="3"/><circle cx="919" cy="498" r="3"/><circle cx="976" cy="498" r="3"/>
               <path class="t" d="M920 446V525"/>
            </g>
            <g class="b"><circle class="t" cx="932" cy="477" r="2.500"/><circle class="t" cx="965" cy="477" r="2.500"/><circle class="t" cx="932" cy="495" r="2.500"/><circle class="t" cx="965" cy="495" r="2.500"/></g>
            <g class="k"><circle class="t" cx="948" cy="485" r="4.500"/><path d="M945 482l6 6M951 482l-6 6"/></g>
            <g class="p">
               <path class="t" d="M952 401H932V426H952M952 546H932V571H952"/><path class="f" d="M996 587h6v15h-6zM986 412h6v3h-6zM986 557h6v3h-6z"/>
               <g class="f"><circle cx="1066" cy="393" r="2.500"/><circle cx="1066" cy="416" r="2.500"/><circle cx="1066" cy="445" r="2.500"/><circle cx="1066" cy="522" r="2.500"/><circle cx="1066" cy="549" r="2.500"/><circle cx="1066" cy="573" r="2.500"/><circle cx="913" cy="393" r="2.500"/><circle cx="913" cy="416" r="2.500"/><circle cx="913" cy="445" r="2.500"/><circle cx="913" cy="522" r="2.500"/><circle cx="913" cy="549" r="2.500"/><circle cx="913" cy="573" r="2.500"/><circle cx="1000" cy="392" r="2.500"/><circle cx="1000" cy="413" r="2.500"/><circle cx="1000" cy="437" r="2.500"/><circle cx="1000" cy="468" r="2.500"/><circle cx="1000" cy="504" r="2.500"/><circle cx="1000" cy="534" r="2.500"/><circle cx="1000" cy="563" r="2.500"/></g>
            </g>
            <text x="96" y="1064">z</text><text x="126" y="1094">y</text>
         </g>
         </svg>
      </section>

      <aside class="layers">
         <div class="caption"><h3>Layers - All Layers</h3><span class="dots"></span><button class="x" aria-label="Close"><svg width="11" height="11"><path d="M2 2l7 7M9 2L2 9" stroke="#fff" stroke-width="2"/></svg></button></div>
         <div class="actions">
            <button aria-label="New layer"><svg viewBox="0 0 16 16"><path d="M4 3h5l3 3v8H4zM9 3v3h3" class="ln"/></svg></button>
            <button aria-label="Copy layer"><svg viewBox="0 0 16 16"><path d="M3 3h4l3 3v6H3zM6 6h4l3 3v5H6z" class="gy"/></svg></button>
            <button aria-label="Delete"><svg viewBox="0 0 16 16"><path d="M4 5l8 7M12 5l-8 7" stroke="#888" stroke-width="1.500"/></svg></button>
            <button aria-label="Move up"><svg viewBox="0 0 16 16"><path d="M3 11l5-5 5 5z" fill="#888"/></svg></button>
            <button aria-label="Move down"><svg viewBox="0 0 16 16"><path d="M3 6l5 5 5-5z" fill="#888"/></svg></button>
            <button aria-label="Parent"><svg viewBox="0 0 16 16"><path d="M10 4L5 9l5 4z" fill="#888"/></svg></button>
            <button aria-label="Filter"><svg viewBox="0 0 16 16"><path d="M3 4h10L9 9v5l-2-1V9z" class="ln"/></svg></button>
            <button aria-label="Tools"><svg viewBox="0 0 16 16"><path d="M3 14l6-6 1 1-6 5zM6 4l3-1 5 4-2 1-3-1-2 1z" class="ln"/></svg></button>
            <button class="q" aria-label="Help">?</button>
         </div>
         <div class="list">
            <table>
               <thead><tr><th class="name">Name</th><th></th><th></th><th></th><th></th><th></th><th class="mat">Mate</th></tr></thead>
               <tbody>
                  <tr><td>Default</td><td></td><td><svg class="lamp"><use href="#lamp"/></svg></td><td><svg class="lamp"><use href="#lock"/></svg></td><td><i class="sw black"></i></td><td><i class="ring"></i></td><td></td></tr>
                  <tr><td>Layer 01</td><td></td><td><svg class="lamp"><use href="#lamp"/></svg></td><td><svg class="lamp"><use href="#lock"/></svg></td><td><i class="sw red"></i></td><td><i class="ring"></i></td><td></td></tr>
                  <tr class="cur"><td>Layer 02</td><td><svg class="lamp"><path d="M2 7l3 3 5-6" fill="none" stroke="#000" stroke-width="2"/></svg></td><td></td><td></td><td><i class="sw purple"></i></td><td><i class="ring"></i></td><td></td></tr>
                  <tr><td>Layer 03</td><td></td><td><svg class="lamp"><use href="#lamp"/></svg></td><td><svg class="lamp"><use href="#lock"/></svg></td><td><i class="sw blue"></i></td><td><i class="ring"></i></td><td></td></tr>
                  <tr><td>Layer 04</td><td></td><td><svg class="lamp"><use href="#lamp"/></svg></td><td><svg class="lamp"><use href="#lock"/></svg></td><td><i class="sw green"></i></td><td><i class="ring"></i></td><td></td></tr>
                  <tr><td>Layer 05</td><td></td><td><svg class="lamp"><use href="#lamp"/></svg></td><td><svg class="lamp"><use href="#lock"/></svg></td><td><i class="sw"></i></td><td><i class="ring"></i></td><td></td></tr>
               </tbody>
            </table>
            <div class="scroll">
               <button class="sb" aria-label="Scroll left"><svg width="14" height="16"><path d="M9 4L5 8l4 4" class="arrow bold"/></svg></button>
               <span class="sb bar"><svg width="10" height="8"><path d="M1 0v7M4 0v7M7 0v7" stroke="#8ea5dd"/></svg></span>
               <button class="sb" aria-label="Scroll right"><svg width="14" height="16"><path d="M5 4l4 4-4 4" class="arrow bold"/></svg></button>
            </div>
         </div>
      </aside>
   </main>

   <form class="osnap">
      <label><input type="checkbox" checked>End</label><label><input type="checkbox" checked>Near</label><label><input type="checkbox" checked>Point</label><label><input type="checkbox" checked>Mid</label><label><input type="checkbox">Cen</label><label><input type="checkbox">Int</label><label><input type="checkbox" checked>Perp</label><label><input type="checkbox" checked>Tan</label><label><input type="checkbox" checked>Quad</label><label><input type="checkbox">Knot</label><label><input type="checkbox" class="round">Project</label><label><input type="checkbox" class="round on">STrack</label><label><input type="checkbox" class="round">Disable</label>
   </form>

   <footer class="status">
      <span class="cplane">CPlane</span><span class="co">x -27.874</span><span class="co">y 49.332</span><span class="co z">z 0.000</span>
      <span class="lay"><i class="sw purple"></i>Layer 02</span>
      <button class="on">Snap</button><button class="on">Ortho</button><button>Planar</button><button class="on">Osnap</button><button class="rec">Record History</button>
   </footer>

   <div class="taskbar">
      <button class="start"><svg width="22" height="22" viewBox="0 0 22 22"><path d="M3 4c3-2 5-2 7 0L9 10C7 9 5 9 2 10z" fill="#f0562b"/><path d="M11 5c3 1 5 1 8-1l-2 7c-2 1-5 1-7 0z" fill="#8ed04a"/><path d="M2 11c3-1 5-1 7 0l-2 7c-2-1-4-1-6 0z" fill="#5b9cf5"/><path d="M10 12c2 1 5 1 7 0l-2 6c-2 1-5 1-7 0z" fill="#fcd62c"/></svg>start</button>
      <button class="task"><svg width="14" height="18" viewBox="0 0 16 18"><path d="M3 1l3 3 3-3 1 5 4 1-2 6-4 4-4-2 2-6-3-3z" fill="#e8a030" stroke="#000"/><path d="M6 6l3 8" stroke="#fff"/></svg><span>DRSpawner</span></button>
      <button class="task"><svg width="16" height="18" viewBox="0 0 18 18"><path d="M14 12a6 5.500 0 11.500-3H5" fill="none" stroke="#7cc8ff" stroke-width="3"/><path d="M2 16C-1 12 8 3 16 2" fill="none" stroke="#f4c430" stroke-width="1.500"/></svg><span>CNC FORUM :: nowy ...</span></button>
      <button class="task active"><svg width="16" height="16" viewBox="0 0 16 16"><rect width="16" height="16" fill="#000"/><path d="M1 1l5 4 3 3 5-4-2 6-4 5-3-3-3-4z" fill="#bbb"/><path d="M2 3l4 2 1 3-4-1zM8 10l4-4-2 6z" fill="#fff"/></svg><span>maszyna 1 - Rhinocer...</span></button>
      <button class="tip" aria-label="Help">?</button>
      <input class="search" type="text" placeholder="Search Desktop" aria-label="Search Desktop">
      <button class="go" aria-label="Search"><svg width="22" height="20" viewBox="0 0 22 20"><circle cx="13" cy="7" r="4.500" fill="#cfe4ff" stroke="#2b5fc0" stroke-width="2"/><path d="M10 11l-5 6" stroke="#444" stroke-width="2"/></svg></button>
      <span class="fill"></span>
      <svg class="ie" width="40" height="28" viewBox="0 0 40 28"><path d="M1 28V8l7-7h30v26z" fill="#2356c4" stroke="#4278dc"/><circle cx="18" cy="15" r="11" fill="#3c8cb8" stroke="#9dc8e0"/><path d="M13 9h11v4H13zM11 15h14v4H11zM13 17h9" fill="none" stroke="#d4f0ff" stroke-width="1.500"/><circle cx="31" cy="8" r="6.500" fill="#d8a81c" stroke="#f2d98a"/><path d="M31 4v5M31 10v2" stroke="#fff" stroke-width="2"/></svg>
      <span class="fill wide"></span>
      <div class="nero"><b>nero</b><small>@SEARCH</small></div>
      <button class="arrowgo" aria-label="Go"><svg width="16" height="16" viewBox="0 0 16 16"><path d="M3 8h8M8 4l4 4-4 4" fill="none" stroke="#fff" stroke-width="2.500"/></svg></button>
      <svg class="caret" width="8" height="6"><path d="M1 1h6L4 5z" fill="#000"/></svg>
      <div class="tray">
         <button class="hide" aria-label="Hide icons"><svg width="16" height="16" viewBox="0 0 16 16"><path d="M10 4L6 8l4 4" fill="none" stroke="#fff" stroke-width="2.500"/></svg></button>
         <svg width="18" height="18" viewBox="0 0 18 18"><path d="M2 3h9v7H2z" fill="#222a55" stroke="#ccc"/><path d="M3 12h7v4H3z" fill="#555"/><path d="M12 3q2 3 0 6M14 2q3 4 0 8" fill="none" stroke="#fff"/></svg>
         <svg width="18" height="18" viewBox="0 0 18 18"><circle cx="11" cy="6" r="5" fill="#eef6ff" stroke="#bcd"/><path d="M7 10l-5 6" stroke="#555" stroke-width="3"/></svg>
         <time>6:15 AM</time>
      </div>
   </div>

   <svg class="defs" width="0" height="0">
      <symbol id="lamp" viewBox="0 0 13 13"><path d="M5 9C5 7 3 6 3 4a3.500 3.500 0 017 0c0 2-2 3-2 5z" fill="#fdf78a" stroke="#8a8420"/><path d="M5 10h3M5 12h3" stroke="#222"/></symbol>
      <symbol id="lock" viewBox="0 0 13 13"><path d="M2 6h7v6H2zM8 6V3c0-3 4-3 4 0v2" fill="none" stroke="#000" stroke-width="1.200"/></symbol>
   </svg>
</body>
</html>
```
FILE: styles.css
```
* { box-sizing:border-box; }
body {
   margin:0;
   height:100vh;
   display:flex;
   flex-direction:column;
   overflow:hidden;
   background:#ece9d8;
   color:#000;
   font:11px/14px "Liberation Sans",Arial,sans-serif;
}
button {
   margin:0;
   padding:0;
   border:0;
   background:none;
   color:inherit;
   font:inherit;
}
svg { display:block; flex:none; }
h1, h2, h3 { margin:0; }

/* title bar */
.titlebar {
   display:flex;
   align-items:center;
   gap:2px;
   height:26px;
   padding:0 2px;
   background:linear-gradient(#3f96ff,#0a5ce8 15%,#0055e5 50%,#0363fc 85%,#0340c0);
}
.titlebar h1 {
   flex:1;
   padding-left:2px;
   color:#fff;
   font:bold 12px/20px "DejaVu Sans Condensed","DejaVu Sans",sans-serif;
   text-shadow:1px 1px #0a3290;
}
.win {
   width:21px;
   height:21px;
   border:1px solid #fff;
   border-radius:3px;
   background:linear-gradient(135deg,#5a8df5,#2257d8 60%,#1c48b8);
}
.win.close { background:linear-gradient(135deg,#f0957a,#dc4a20 60%,#b83810); }

/* menu */
.menu {
   display:flex;
   gap:11px;
   height:20px;
   padding:0 0 2px 5px;
   border-bottom:1px solid #a8a594;
}

/* command area */
.command {
   height:48px;
   padding:1px 2px 8px 8px;
   border-bottom:1px solid #a8a594;
   background:radial-gradient(circle,#aaa 1px,transparent 1px) 3px 5px/4px 4px repeat-y #f2f1ea;
   font-size:12px;
}
.history, .prompt { display:flex; align-items:center; background:#fff; height:20px; }
.history { padding-top:2px; border-bottom:1px solid #000; justify-content:space-between; }
.spin { display:block; }
.spin button { display:block; background:#c3d3fd; height:7px; margin-bottom:1px; }
.prompt { height:18px; padding-right:18px; gap:2px; }
.prompt label { font-weight:bold; font-size:11px; padding-right:4px; }
.prompt label, .history > span:first-child { padding-left:1px; }
.prompt input {
   flex:1;
   height:14px;
   padding:0;
   border:0;
   border-left:1px solid #000;
   font:inherit;
   outline:0;
}
.sb {
   width:14px;
   height:16px;
   border-radius:2px;
   background:linear-gradient(#cfdcff,#b6c8f8);
}
.thumb { width:6px; margin-right:5px; }
.arrow { fill:none; stroke:#3f5a93; }
.arrow.bold { stroke-width:2; }

/* toolbars */
.toolrow { height:28px; }
.toolbar {
   display:inline-flex;
   height:28px;
   padding-left:7px;
   border-right:1px solid #a8a594;
   background:radial-gradient(circle,#aaa 1px,transparent 1px) 3px 4px/4px 4px repeat-y,linear-gradient(#fbfaf8,#ebe9dd);
}
.toolbar button, .palette button { width:28px; height:28px; }
.toolbar svg, .palette svg { width:28px; height:28px; }
.more { background:linear-gradient(135deg,transparent 46%,#888 46%,#888 56%,transparent 56%) 23px 22px/5px 5px no-repeat; }
.help span {
   display:block;
   width:20px;
   height:20px;
   margin:0 4px;
   border-radius:10px;
   background:linear-gradient(#6a8cf0,#2b4cc0);
   color:#fff;
   font:bold 17px/20px "Liberation Serif",serif;
}
.ln { fill:none; stroke:#000; }
.gy { fill:none; stroke:#888; }
.lens { fill:#f4f4f4; stroke:#333; }
.nd { fill:#fff; stroke:#000; }
.bl { fill:#8ba6f0; stroke:#16205c; }
.w2 { stroke-width:2; }

.work { flex:1; display:flex; min-height:0; }
.tools { width:58px; }
.palette {
   display:grid;
   grid-template-columns:28px 28px;
   column-gap:1px;
   padding:9px 0 0 1px;
   border-bottom:1px solid #a8a594;
   background:
      radial-gradient(circle,#999 1px,transparent 1px) 5px 5px/4px 4px repeat-x,
      linear-gradient(90deg,#fafaf7,#efeee6 28px,#aaa 29px,#fafaf7 30px,#efeee6);
}

/* viewport */
.viewport { position:relative; flex:1; background:#9d9d9d; overflow:hidden; }
.viewport h2 {
   position:absolute;
   top:0;
   left:0;
   width:48px;
   background:#0054e3;
   color:#fff;
   font-size:13px;
   line-height:18px;
   text-align:center;
}
.drawing { width:100%; height:100%; shape-rendering:crispEdges; fill:none; }
.drawing text { fill:#555; font-size:13px; }
.k { stroke:#000; }
.r { stroke:#f00; }
.g { stroke:#007a00; }
.b { stroke:#00f; }
.p { stroke:#7d26cd; }
.t { stroke-width:2; }
.t3 { stroke-width:3; }
.bolt { stroke-width:4; }
.pin { stroke-width:4; }
.olive { stroke:#6f5c10; }
.k .f { fill:#000; }
.r .f { fill:#f00; }
.b .f { fill:#00f; }
.p .f { fill:#7d26cd; }
.drawing circle { shape-rendering:auto; }

/* layer panel */
.layers {
   width:209px;
   display:flex;
   flex-direction:column;
   padding:2px 1px 1px 8px;
   border-top:1px solid #fff;
   background:#f4f3ee;
}
.caption { display:flex; align-items:center; gap:7px; height:16px; padding:0 1px 0 2px; }
.caption h3 { font-size:11px; font-weight:normal; }
.dots { flex:1; height:8px; background:radial-gradient(circle,#999 1px,transparent 1px) 0 0/4px 4px; }
.x { width:11px; height:11px; background:#d8482c; border-radius:1px; }
.actions { display:flex; gap:5px; height:24px; padding:2px 2px; background:#ece9d8; }
.actions svg, .actions button { width:16px; height:16px; }
.q { font-weight:bold; font-size:13px; }
.list {
   flex:1;
   display:flex;
   flex-direction:column;
   justify-content:space-between;
   padding:1px;
   border:1px solid #7f9db9;
   background:#fff;
}
table { width:100%; table-layout:fixed; border-collapse:collapse; }
th {
   width:17px;
   height:19px;
   padding:0;
   background:linear-gradient(90deg,#aca899,#aca899) right/1px 12px no-repeat,#ece9d8;
   border-bottom:1px solid #cbc7b8;
   font-weight:normal;
   text-align:left;
}
th.name { width:79px; padding-left:9px; }
th.mat { width:auto; padding-left:9px; overflow:hidden; white-space:nowrap; }
td { height:15px; padding:0 0 0 2px; border-bottom:1px solid #f3f3f3; line-height:14px; }
td:first-child { padding-left:8px; }
.cur td { background:#f0f0f0; font-weight:bold; }
.cur td:first-child { padding-left:10px; }
.lamp { width:13px; height:13px; }
.sw {
   display:block;
   width:10px;
   height:10px;
   border:1px solid #000;
   background:#fff;
}
td .sw { margin-left:1px; }
.sw.black { background:#000; }
.sw.red { background:#f00; }
.sw.purple { background:#7d26cd; }
.sw.blue { background:#00f; }
.sw.green { background:#007a00; }
.ring { display:block; width:11px; height:11px; border:1px solid #e8e8e8; border-radius:6px; background:#fff; }
.scroll { display:flex; gap:3px; height:17px; background:#f5f4ef; }
.bar { width:74px; margin-right:auto; padding:4px 32px; }

/* osnap + status */
.osnap {
   display:flex;
   align-items:center;
   align-self:flex-start;
   height:23px;
   padding:0 5px 0 10px;
   border-right:1px solid #a8a594;
   background:radial-gradient(circle,#aaa 1px,transparent 1px) 3px 4px/4px 4px repeat-y;
}
.osnap label { display:flex; align-items:center; gap:3px; width:54px; }
.osnap input {
   appearance:none;
   flex:none;
   width:13px;
   height:13px;
   margin:0;
   border:1px solid #1c5180;
   background:#f6f6f3;
}
.osnap input:checked { position:relative; }
.osnap input:checked::after {
   content:"";
   position:absolute;
   left:3px;
   top:1px;
   width:3px;
   height:6px;
   border:solid #21a121;
   border-width:0 2px 2px 0;
   transform:rotate(40deg);
}
.osnap .round { border-radius:3px; }
.osnap .round.on { background:#0c3c78; box-shadow:inset 0 0 0 1px #fff; }
.status {
   display:flex;
   align-items:center;
   height:20px;
   border-top:2px solid #aca899;
   background:linear-gradient(#f6f4ea,#ece9d8 5px);
}
.cplane { width:59px; padding-left:10px; }
.co { width:88px; }
.co.z { width:178px; }
.lay { display:flex; align-items:center; gap:2px; width:168px; }
.status button { width:48px; height:16px; border-left:1px solid #fff; }
.status .on { background:#f5f3ea; font-weight:bold; }
.status .rec { width:109px; border-right:1px solid #fff; }

/* taskbar */
.taskbar {
   display:flex;
   align-items:center;
   height:30px;
   background:linear-gradient(#3d83ee,#245edc 4px,#245edc 24px,#1941a5);
   color:#fff;
}
.start {
   display:flex;
   align-items:center;
   gap:2px;
   width:97px;
   height:30px;
   margin-right:10px;
   padding-left:9px;
   border-radius:0 10px 10px 0;
   background:linear-gradient(#6cb56b,#3c943a 15%,#379636 70%,#2b7129);
   font:italic bold 18px/24px "Open Sans",sans-serif;
   text-shadow:1px 1px 1px #234;
}
.task {
   display:flex;
   align-items:center;
   gap:3px;
   width:158px;
   height:24px;
   margin-right:2px;
   padding-left:10px;
   border-radius:3px;
   background:linear-gradient(#5a9bff,#3c81f3 5px,#3a7cee);
}
.task.active { background:#1e52b7; }
.tip {
   width:13px;
   height:15px;
   margin:0 11px 0 18px;
   border:1px solid #000;
   background:#fffbe0;
   color:#000;
   font-weight:bold;
}
.search {
   width:109px;
   height:20px;
   padding:0 4px;
   border:0;
   font:12px/18px "Liberation Sans",Arial,sans-serif;
}
.search::placeholder { color:#999; }
.go { width:25px; height:20px; background:#dce2f0; }
.fill { flex:428; }
.fill.wide { flex:418; }
.nero {
   align-self:flex-end;
   width:108px;
   height:18px;
   background:#fff;
   color:#777;
   text-align:center;
   font-size:12px;
   line-height:9px;
}
.nero b, .nero small { display:block; }
.nero small { font-size:8px; }
.arrowgo { margin:12px 8px 0 6px; background:#4cae2c; border-radius:2px; }
.caret { margin:12px 12px 0 0; }
.tray {
   display:flex;
   align-items:center;
   gap:3px;
   width:110px;
   height:30px;
   background:linear-gradient(#1bb0f4,#0d95e8 5px,#128ce6 24px,#0b6cc0);
}
.hide { margin-left:-9px; border-radius:8px; background:#3b9ae8; }
.tray time { padding-left:3px; }
.defs { position:absolute; }
```
